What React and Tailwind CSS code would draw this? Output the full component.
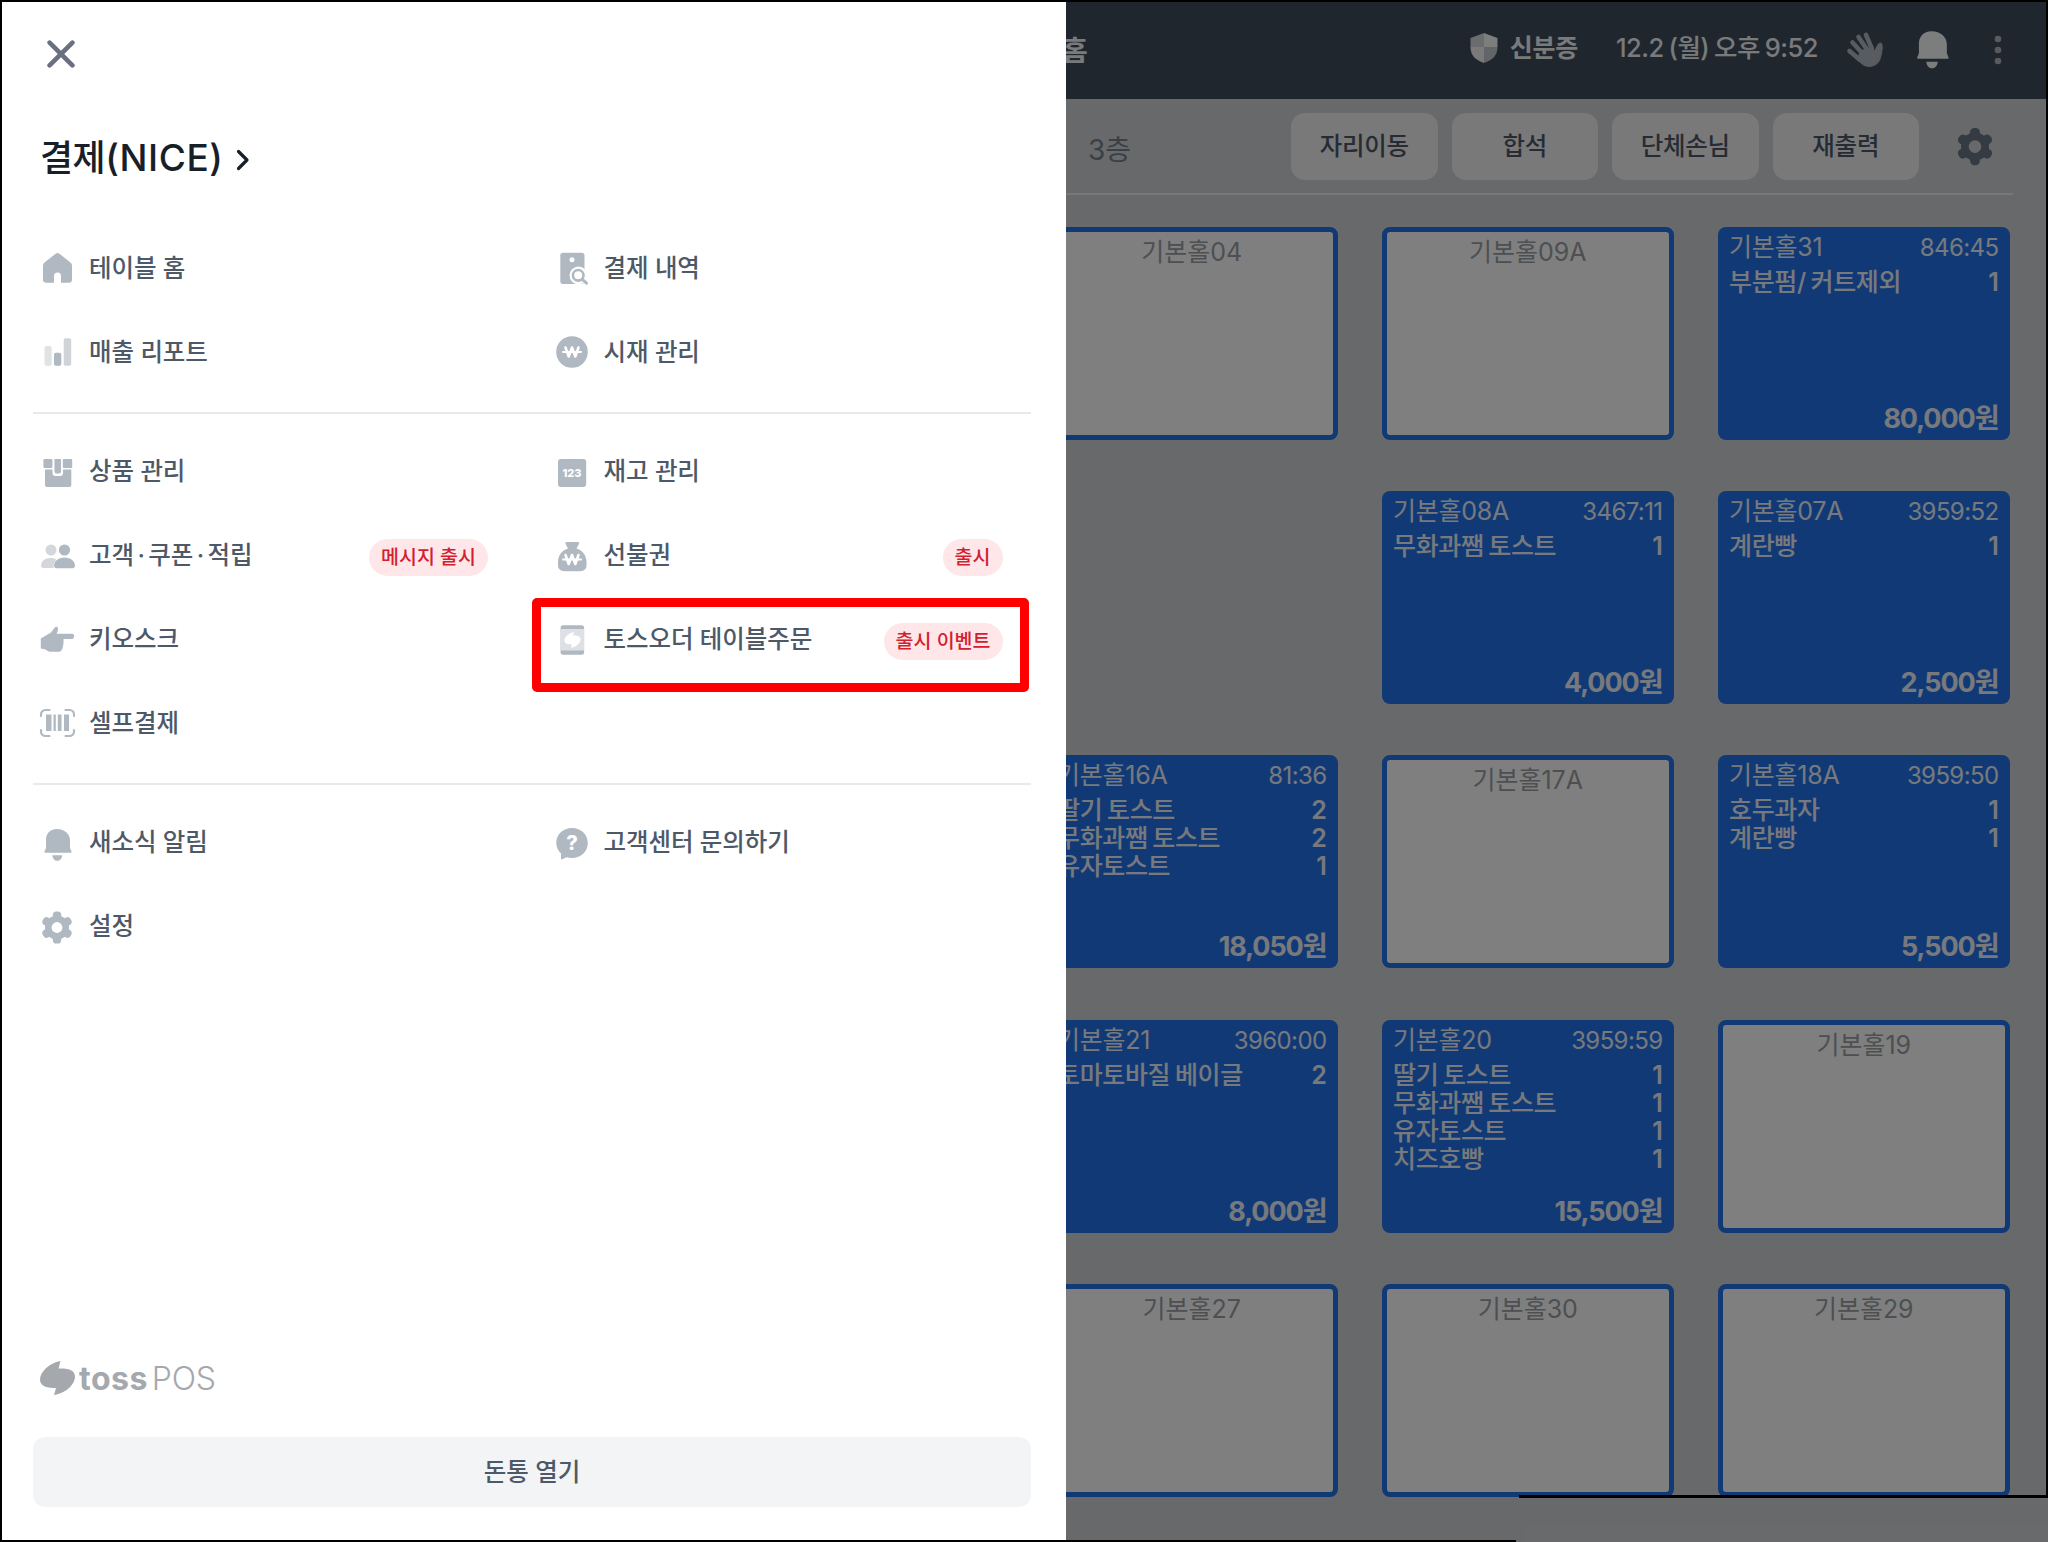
import React from 'react';
import clsx from 'clsx';

const Svg = ({ children, className = 'size-9', box = '0 0 36 36' }) => (
  <svg viewBox={box} className={clsx('shrink-0', className)} fill="#b0b8c1">
    {children}
  </svg>
);

const TOSS_MARK = 'M20.5 0C9 2 0 11 0 18.500C0 24.500 5 27 16 27L14 34C27 32 35 23 35 15.500C35 9.500 29 7 18.500 7.500Z';
const BELL = 'M18 4C10.500 4 7 9 7 15V23L5.600 26.300C5.300 27.200 5.600 27.800 6.500 27.800H31.500C32.400 27.800 32.700 27.200 32.400 26.300L31 23V15C31 9 25.500 4 18 4ZM13.400 30.200H23.200C23 33.500 21 35.800 18.300 35.800S13.600 33.500 13.400 30.200Z';

const WonMark = ({ y = 18 }) => (
  <g transform={`translate(18 ${y})`} fill="none" stroke="#fff" strokeWidth="2.6" strokeLinecap="round" strokeLinejoin="round">
    <path d="M-6.500 -4.500L-3.300 4.500L0 -4.500L3.300 4.500L6.500 -4.500" />
    <path d="M-9 0H9" strokeWidth="2" />
  </g>
);

const Gear = ({ className, id, fill = '#b0b8c1' }) => (
  <Svg className={className}>
    <mask id={id}>
      <rect width="36" height="36" fill="#fff" />
      <circle cx="18" cy="18.500" r="5.400" fill="#000" />
    </mask>
    <g mask={`url(#${id})`} fill={fill}>
      <circle cx="18" cy="18.500" r="12" />
      <rect x="13.800" y="2.500" width="8.400" height="32" rx="3.600" />
      <rect x="13.800" y="2.500" width="8.400" height="32" rx="3.600" transform="rotate(60 18 18.500)" />
      <rect x="13.800" y="2.500" width="8.400" height="32" rx="3.600" transform="rotate(120 18 18.500)" />
    </g>
  </Svg>
);

const icons = {
  home: (
    <Svg>
      <path d="M16.600 3.700a3 3 0 0 1 3.800 0L31.500 12.500A4 4 0 0 1 33 15.500V29.500A3.300 3.300 0 0 1 29.700 32.800H22V26A3.500 3.500 0 0 0 15 26V32.800H7.300A3.300 3.300 0 0 1 4 29.500V15.500A4 4 0 0 1 5.500 12.500Z" />
    </Svg>
  ),
  report: (
    <Svg>
      <rect x="5.500" y="12" width="7.200" height="19.700" rx="1.800" fill="#e0e3e6" />
      <rect x="15" y="18.700" width="7.300" height="13" rx="1.800" />
      <rect x="24.700" y="4.300" width="7.500" height="27.400" rx="1.800" fill="#d0d4d9" />
    </Svg>
  ),
  history: (
    <Svg>
      <rect x="6.300" y="2.700" width="24.200" height="31.300" rx="2.800" />
      <circle cx="18" cy="9.700" r="2.500" fill="#fff" />
      <circle cx="24.500" cy="25.500" r="9" fill="#fff" />
      <path d="M28.500 29.500L33 33.500" stroke="#fff" strokeWidth="5" />
      <circle cx="24.200" cy="25.300" r="5.300" fill="none" stroke="#b0b8c1" strokeWidth="2.600" />
      <path d="M28.200 29.300L32.500 33.200" stroke="#b0b8c1" strokeWidth="3" strokeLinecap="round" />
    </Svg>
  ),
  cash: (
    <Svg>
      <circle cx="18" cy="18" r="15.800" />
      <WonMark />
    </Svg>
  ),
  product: (
    <Svg>
      <rect x="4.400" y="5" width="9" height="9" rx="1" />
      <rect x="23.800" y="5" width="9.400" height="9" rx="1" />
      <path d="M15.500 5H22V17.500A2 2 0 0 1 20 19.500H17.500A2 2 0 0 1 15.500 17.500Z" />
      <path d="M6 15.500H13.500V19A3 3 0 0 0 16.500 22H21A3 3 0 0 0 24 19V15.500H32.300V31A2 2 0 0 1 30.300 33H8A2 2 0 0 1 6 31Z" />
    </Svg>
  ),
  customer: (
    <Svg>
      <g fill="#d3d7db">
        <circle cx="12" cy="12" r="5.500" />
        <path d="M2 28C2 23 6 20 11.500 20C14 20 16 20.500 17.500 21.800C15.500 23.500 14.300 26 14.500 30H4.500C2.800 30 2 29.200 2 28Z" />
      </g>
      <circle cx="25.500" cy="12" r="5.600" />
      <path d="M15 28C15 23 19.500 19.500 25.500 19.500S36 23 36 28C36 29.500 34.500 30.300 32 30.300H19C16.500 30.300 15 29.500 15 28Z" />
    </Svg>
  ),
  kiosk: (
    <Svg>
      <path d="M1.800 16.500L12 10.500L15.800 5.600C17 4.200 19 4.800 19 6.500C19 8.500 18.500 10.200 17.500 11.800H33C34.500 11.800 35.200 13 35.200 14.300S34.300 17 33 17H24.500C24.800 20 24.300 25 23 27.500C22.300 29 21 29.800 19 29.800H12.500C10 29.800 8.500 29 6.500 27.500L1.800 26.500Z" />
    </Svg>
  ),
  selfpay: (
    <Svg>
      <path
        d="M2 11V9.500A4.500 4.500 0 0 1 6.500 5H10.500M26.500 5H30.500A4.500 4.500 0 0 1 35 9.500V11M35 25V26.500A4.500 4.500 0 0 1 30.500 31H26.500M10.500 31H6.500A4.500 4.500 0 0 1 2 26.500V25"
        fill="none"
        stroke="#b0b8c1"
        strokeWidth="2.200"
        strokeLinecap="round"
      />
      <path d="M7 9.500H12.500V26H7ZM14.500 9.500H16.800V26H14.500ZM18.800 9.500H22.500V26H18.800ZM25 9.500H30V26H25Z" />
    </Svg>
  ),
  stock: (
    <Svg>
      <rect x="4" y="5" width="28.200" height="28" rx="3" />
      <text x="18" y="22.600" fill="#fff" fontSize="11" fontWeight="800" textAnchor="middle" fontFamily="Inter">
        123
      </text>
    </Svg>
  ),
  prepaid: (
    <Svg>
      <path d="M12.500 4H24A1.200 1.200 0 0 1 25 5.800L22.500 10.500C29 12.500 32.500 18 32.500 24V27C32.500 31 30 33.200 26 33.200H10.500C6.500 33.200 4 31 4 27V24C4 18 7.500 12.500 14 10.500L11.500 5.800A1.200 1.200 0 0 1 12.500 4Z" />
      <WonMark y={21.5} />
    </Svg>
  ),
  order: (
    <Svg>
      <rect x="6.600" y="3.300" width="23.500" height="29.500" rx="2.500" />
      <rect x="6.600" y="7" width="23.500" height="21.500" fill="#dde0e4" />
      <path d={TOSS_MARK} fill="#fff" transform="translate(10.500 10) scale(0.460)" />
    </Svg>
  ),
  bell: (
    <Svg>
      <path d={BELL} />
    </Svg>
  ),
  settings: <Gear id="gear-menu" />,
  help: (
    <Svg>
      <path d="M18 3C9 3 2.300 9.500 2.300 18C2.300 22 4 26 7 28.500V33.500C7 34.500 7.500 34.700 8.300 34.300L12.500 32.200C14.300 32.800 16 33 18 33C27 33 33.800 26.500 33.800 18S27 3 18 3Z" />
      <text x="18" y="25" fill="#fff" fontSize="20" fontWeight="800" textAnchor="middle" fontFamily="Inter">
        ?
      </text>
    </Svg>
  ),
};

const menuSections = [
  [
    { icon: 'home', label: '테이블 홈' },
    { icon: 'history', label: '결제 내역' },
    { icon: 'report', label: '매출 리포트' },
    { icon: 'cash', label: '시재 관리' },
  ],
  [
    { icon: 'product', label: '상품 관리' },
    { icon: 'stock', label: '재고 관리' },
    { icon: 'customer', label: '고객·쿠폰·적립', badge: '메시지 출시' },
    { icon: 'prepaid', label: '선불권', badge: '출시' },
    { icon: 'kiosk', label: '키오스크' },
    { icon: 'order', label: '토스오더 테이블주문', badge: '출시 이벤트', highlight: true },
    { icon: 'selfpay', label: '셀프결제' },
  ],
  [
    { icon: 'bell', label: '새소식 알림' },
    { icon: 'help', label: '고객센터 문의하기' },
    { icon: 'settings', label: '설정' },
  ],
];

const tables = [
  { name: '기본홀04' },
  { name: '기본홀09A' },
  { name: '기본홀31', time: '846:45', items: [['부분펌/ 커트제외', 1]], total: '80,000원' },
  null,
  { name: '기본홀08A', time: '3467:11', items: [['무화과쨈 토스트', 1]], total: '4,000원' },
  { name: '기본홀07A', time: '3959:52', items: [['계란빵', 1]], total: '2,500원' },
  {
    name: '기본홀16A',
    time: '81:36',
    items: [['딸기 토스트', 2], ['무화과쨈 토스트', 2], ['유자토스트', 1]],
    total: '18,050원',
  },
  { name: '기본홀17A' },
  { name: '기본홀18A', time: '3959:50', items: [['호두과자', 1], ['계란빵', 1]], total: '5,500원' },
  { name: '기본홀21', time: '3960:00', items: [['토마토바질 베이글', 2]], total: '8,000원' },
  {
    name: '기본홀20',
    time: '3959:59',
    items: [['딸기 토스트', 1], ['무화과쨈 토스트', 1], ['유자토스트', 1], ['치즈호빵', 1]],
    total: '15,500원',
  },
  { name: '기본홀19' },
  { name: '기본홀27' },
  { name: '기본홀30' },
  { name: '기본홀29' },
];

const MenuLabel = ({ text }) => (
  <span className="ml-3.5 text-[24.5px] font-medium tracking-[-0.003em] text-[#4e5968]">
    {text.split('·').map((part, i) => (
      <React.Fragment key={part}>
        {i > 0 && <span className="px-[3.5px]">·</span>}
        {part}
      </React.Fragment>
    ))}
  </span>
);

const MenuItem = ({ item }) => (
  <div className="relative flex h-[83.9px] items-center">
    {icons[item.icon]}
    <MenuLabel text={item.label} />
    {item.badge && (
      <span className="ml-auto mt-[3px] flex h-[37px] items-center rounded-full bg-[#ffe7e9] px-3 pt-px text-[19.5px] font-medium text-[#d22030]">
        {item.badge}
      </span>
    )}
    {item.highlight && (
      <div className="absolute -left-[22px] -right-[26px] top-0 -bottom-[11px] rounded-[5px] border-[9px] border-[#ff0000]" />
    )}
  </div>
);

const Drawer = () => (
  <aside className="z-20 flex w-[1064px] shrink-0 flex-col bg-white pl-[31px] pr-[35px]">
    <svg viewBox="0 0 28 28" className="mt-[38px] ml-3.5 size-7" stroke="#6b7080" strokeWidth="4.600" strokeLinecap="round">
      <path d="M2.600 2.600L25.400 25.400M25.400 2.600L2.600 25.400" />
    </svg>
    <h1 className="mt-[64px] ml-[7px] flex h-[50px] items-center pt-px text-[36px] font-medium tracking-[-0.015em] text-[#191f28]">
      결제<span className="text-[37px] tracking-[0.015em]">(NICE)</span>
      <svg viewBox="0 0 14 22" className="ml-3 mt-1 h-[22px] w-3.5" fill="none" stroke="#191f28" strokeWidth="3.200" strokeLinecap="round" strokeLinejoin="round">
        <path d="M2.500 2.500L11 11L2.500 19.500" />
      </svg>
    </h1>
    <nav className="mt-[44.500px] flex flex-col">
      {menuSections.map((section, i) => (
        <div key={i} className={clsx('grid grid-cols-[449px_449px] gap-x-[65.5px] pl-1.5', i > 0 && 'mt-[17.5px] border-t-2 border-[#e8e9eb] pt-4')}>
          {section.map((item) => (
            <MenuItem key={item.label} item={item} />
          ))}
        </div>
      ))}
    </nav>
    <div className="mt-auto flex items-center pl-[7px] text-[32px] leading-9 text-[#a5a8ad]">
      <Svg box="0 0 35 34" className="h-[34px] w-[35px]">
        <path d={TOSS_MARK} fill="#a5a8ad" />
      </Svg>
      <span className="ml-1 mt-[3px] font-bold tracking-[0.015em]">toss</span>
      <span className="ml-1 mt-[3px] font-light tracking-[-0.005em]">POS</span>
    </div>
    <button className="mt-10 mb-[35px] h-[70px] rounded-xl bg-[#f2f4f6] text-[24.5px] font-medium text-[#4e5968]">돈통 열기</button>
  </aside>
);

const TableCard = ({ table }) => {
  if (!table) return <div />;
  if (!table.total) {
    return (
      <div className="rounded-[8px] border-[5px] border-[#2272eb] bg-white pt-1.5 text-center text-[25px] leading-7 text-[#9a9fa5]">
        {table.name}
      </div>
    );
  }
  return (
    <div className="flex flex-col rounded-[8px] bg-[#2272eb] px-[11px] pt-1.5 pb-[7px] text-[25px] leading-7 tracking-[-0.01em] text-[#eef3fb]">
      <div className="flex justify-between">
        <span>{table.name}</span>
        <span className="pt-px text-[24px] tracking-[-0.025em]">{table.time}</span>
      </div>
      <div className="mt-1.5 font-medium">
        {table.items.map(([name, count]) => (
          <div key={name} className="flex justify-between">
            <span className="tracking-[-0.015em] [word-spacing:-1.5px]">{name}</span>
            <span className="font-semibold">{count}</span>
          </div>
        ))}
      </div>
      <div className="mt-auto text-right text-[27px] font-bold tracking-[-0.04em]">{table.total}</div>
    </div>
  );
};

const TopBar = () => (
  <header className="flex h-[97px] items-center bg-[#404c5a] pl-4 pr-[46px] pb-1.5 text-[25px] font-medium text-[#f2f4f6]">
    <span className="pt-1.5 text-[28px] font-bold">홈</span>
    <svg viewBox="0 0 28 30" className="ml-auto h-[30px] w-7">
      <path d="M14 0V14H0.500V5L14 0Z" fill="#d4d9dd" />
      <path d="M14 0L27.500 5V14H14Z" fill="#f9fafb" />
      <path d="M0.500 14H14V30C5 27 0.500 22 0.500 14Z" fill="#f4f5f6" />
      <path d="M27.500 14H14V30C23 27 27.500 22 27.500 14Z" fill="#c4cacf" />
    </svg>
    <span className="ml-3 pt-0.5 font-bold tracking-[-0.01em]">신분증</span>
    <span className="ml-[38px] w-[203px] whitespace-nowrap pt-0.5 text-[25.5px] tracking-[-0.02em] [word-spacing:-1.5px]">12.2 (월) 오후 9:52</span>
    <svg viewBox="0 0 38 38" className="ml-[27px] mt-1 size-[38px]" fill="#b0b8c1" stroke="#b0b8c1" strokeLinecap="round">
      <path d="M3.500 20L14 29M6.500 11.500L18 24M12.500 6L22 20M20 3.800L26 18" strokeWidth="4.600" fill="none" />
      <path d="M14 29C10 25 15 18 22 17C25 16.500 27 19 28.500 19.500C31 17 31.500 12 34.500 12C37.500 12.500 36 22 34 28C31.500 36 20 38.500 14 31Z" strokeWidth="1" />
    </svg>
    <svg viewBox="4 3 28.500 33.500" className="ml-[31px] mt-1 h-[39px] w-[34px]" fill="#f9fafb">
      <path d={BELL} />
    </svg>
    <svg viewBox="0 0 8 30" className="ml-[45px] mt-1 h-[30px] w-2" fill="#b0b8c1">
      <circle cx="4" cy="4" r="3.300" />
      <circle cx="4" cy="15" r="3.300" />
      <circle cx="4" cy="26" r="3.300" />
    </svg>
  </header>
);

const FloorPage = () => (
  <main className="relative -ml-5 flex w-[1002px] shrink-0 flex-col overflow-hidden bg-[#d1d3d6]">
    <TopBar />
    <div className="mr-[35px] flex h-[96px] shrink-0 items-center border-b-2 border-[#f0f1f3] pl-[42px] text-[24.5px] font-medium text-[#4e5968]">
      <span className="mt-2 mr-auto text-[28px] font-normal text-[#76808c]">3층</span>
      <div className="flex gap-3.5">
        {['자리이동', '합석', '단체손님', '재출력'].map((label) => (
          <button key={label} className="h-[67px] w-[146.5px] rounded-[14px] bg-[#f2f3f4] tracking-[-0.01em]">
            {label}
          </button>
        ))}
      </div>
      <Gear id="gear-bar" className="mr-[17px] ml-[35px] size-[42px]" fill="#6b7684" />
    </div>
    <div className="mt-8 grid grid-cols-[291.5px_291.5px_291.5px] grid-rows-[repeat(5,213px)] gap-x-[44.5px] gap-y-[51.2px]">
      {tables.map((table, i) => (
        <TableCard key={i} table={table} />
      ))}
    </div>
    {/* dim layer behind the open drawer */}
    <div className="absolute inset-0 bg-black/50" />
  </main>
);

const App = () => (
  <div className="relative flex h-[1542px] w-[2048px] overflow-hidden bg-[#68696b] pt-0.5 pl-0.5 font-['Inter','Noto_Sans_CJK_KR',sans-serif]">
    <Drawer />
    <FloorPage />
    {/* window frame lines */}
    <div className="absolute inset-x-0 top-0 z-30 h-0.5 bg-black" />
    <div className="absolute inset-y-0 left-0 z-30 w-0.5 bg-black" />
    <div className="absolute top-0 right-0 z-30 h-[1498px] w-0.5 bg-black" />
    <div className="absolute top-[1495px] right-0 z-30 h-[3px] w-[529px] bg-black" />
    <div className="absolute bottom-0 left-0 z-30 h-0.5 w-[1516px] bg-black" />
  </div>
);

export default App;
